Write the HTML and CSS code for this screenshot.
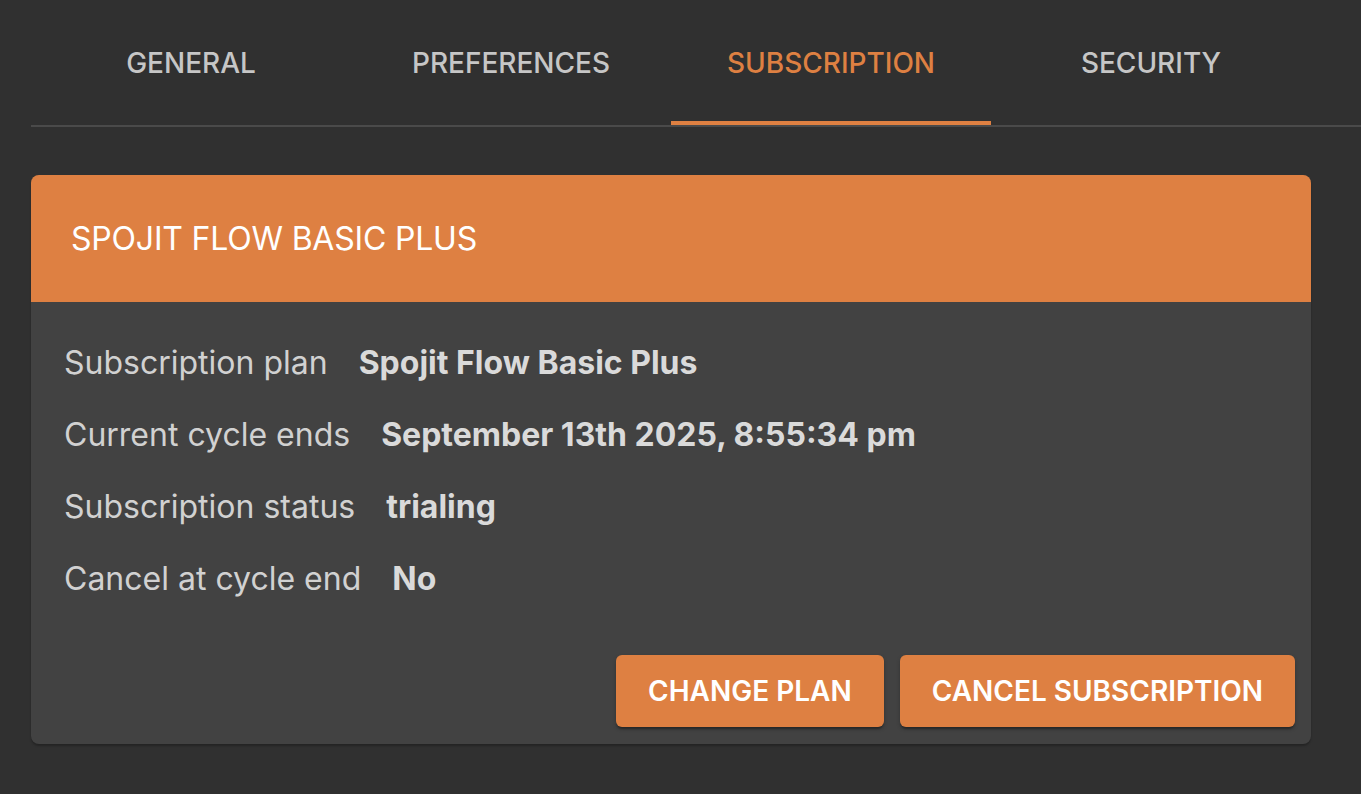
FILE: index.html
```html
<!DOCTYPE html>
<html lang="en">
<head>
<meta charset="utf-8">
<title>Subscription</title>
<link rel="stylesheet" href="styles.css">
</head>
<body>
<div class="page">
  <nav class="tabs">
    <div class="tab">GENERAL</div>
    <div class="tab">PREFERENCES</div>
    <div class="tab active">SUBSCRIPTION</div>
    <div class="tab">SECURITY</div>
  </nav>
  <section class="card">
    <header class="card-header">SPOJIT FLOW BASIC PLUS</header>
    <div class="card-body">
      <div class="row"><span class="label">Subscription plan</span><span class="value">Spojit Flow Basic Plus</span></div>
      <div class="row"><span class="label">Current cycle ends</span><span class="value">September 13th 2025, 8:55:34 pm</span></div>
      <div class="row"><span class="label">Subscription status</span><span class="value">trialing</span></div>
      <div class="row"><span class="label">Cancel at cycle end</span><span class="value">No</span></div>
    </div>
    <div class="actions">
      <button class="btn">CHANGE PLAN</button>
      <button class="btn">CANCEL SUBSCRIPTION</button>
    </div>
  </section>
</div>
</body>
</html>
```
FILE: styles.css
```css
html, body {
  margin: 0;
  padding: 0;
  background: #303030;
  font-family: Inter, "Liberation Sans", sans-serif;
}
.page {
  width: 1361px;
  height: 794px;
  overflow: hidden;
}
.tabs {
  display: flex;
  margin-left: 31px;
  border-bottom: 2px solid #4a4a4a;
}
.tab {
  width: 320px;
  height: 125px;
  box-sizing: border-box;
  display: flex;
  align-items: center;
  justify-content: center;
  padding-top: 1px;
  font-size: 28px;
  font-weight: 500;
  letter-spacing: 0;
  color: #c6c6c6;
}
.tab.active {
  color: #de8042;
  border-bottom: 4px solid #de8042;
  padding-top: 5px;
}
.card {
  margin: 48px 0 0 31px;
  width: 1280px;
  background: #424242;
  border-radius: 8px;
  overflow: hidden;
  box-shadow: 0 2px 2px rgba(0,0,0,0.25);
}
.card-header {
  height: 127px;
  background: #de8042;
  color: #ffffff;
  font-size: 32px;
  font-weight: 400;
  letter-spacing: -0.2px;
  display: flex;
  align-items: center;
  padding-left: 40px;
  box-sizing: border-box;
}
.card-body {
  display: flex;
  flex-direction: column;
  gap: 24px;
  padding: 37px 33px 0;
}
.row {
  display: flex;
  gap: 31px;
  line-height: 48px;
  font-size: 32px;
}
.label {
  color: #d1d1d1;
  font-weight: 400;
}
.value {
  color: #dadada;
  font-weight: 700;
}
.actions {
  display: flex;
  justify-content: flex-end;
  gap: 16px;
  padding: 52px 16px 17px;
}
.btn {
  height: 72px;
  padding: 0 32px;
  border: none;
  border-radius: 6px;
  background: #de8042;
  color: #ffffff;
  font-family: Inter, "Liberation Sans", sans-serif;
  font-size: 28px;
  font-weight: 600;
  letter-spacing: 0;
  box-shadow: 0 3px 2px -1px rgba(0,0,0,0.3), 0 2px 4px rgba(0,0,0,0.2);
}
```
